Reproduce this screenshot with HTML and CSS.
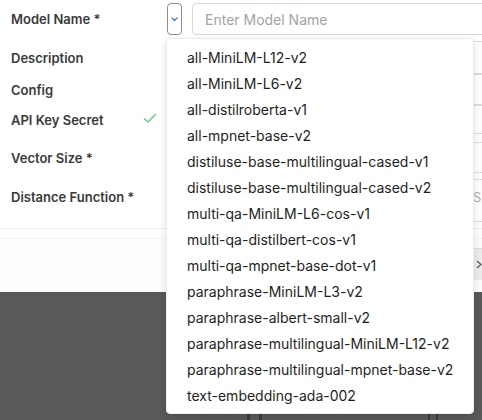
FILE: index.html
```html
<!DOCTYPE html>
<html>
<head>
<meta charset="utf-8">
<link rel="stylesheet" href="styles.css">
</head>
<body>
<div class="page">
  <div class="panel">
    <div class="form">
      <div class="row r1">
        <div class="label">Model Name *</div>
        <div class="picker">
          <svg width="7" height="5" viewBox="0 0 7 5"><path d="M1 1 L3.5 3.5 L6 1" fill="none" stroke="#3f7ee8" stroke-width="1.3" stroke-linecap="round" stroke-linejoin="round"/></svg>
        </div>
        <div class="input top"><span class="ph">Enter Model Name</span></div>
      </div>
      <div class="row r2">
        <div class="label">Description</div>
        <div class="field"></div>
      </div>
      <div class="row r3">
        <div class="label">Config</div>
        <div class="field"></div>
      </div>
      <div class="row r4">
        <div class="label"><span>API Key Secret</span>
          <svg class="check" width="14" height="11" viewBox="0 0 14 11"><path d="M1.5 5.8 L5 9 L12.5 1.5" fill="none" stroke="#6fd08c" stroke-width="1.6" stroke-linecap="round" stroke-linejoin="round"/></svg>
        </div>
        <div class="field"></div>
      </div>
      <div class="row r5">
        <div class="label">Vector Size *</div>
        <div class="field"></div>
      </div>
      <div class="row r6">
        <div class="label">Distance Function *</div>
        <div class="field"><span class="sel">S</span></div>
      </div>
    </div>
    <div class="footer">
      <div class="btn"><svg width="6" height="9" viewBox="0 0 6 9"><path d="M1 1 L5 4.5 L1 8" fill="none" stroke="#555" stroke-width="1.2"/></svg></div>
    </div>
  </div>
  <div class="backdrop">
    <div class="frame"><div class="inner"></div></div>
  </div>

  <ul class="menu">
    <li>all-MiniLM-L12-v2</li>
    <li>all-MiniLM-L6-v2</li>
    <li>all-distilroberta-v1</li>
    <li>all-mpnet-base-v2</li>
    <li>distiluse-base-multilingual-cased-v1</li>
    <li>distiluse-base-multilingual-cased-v2</li>
    <li>multi-qa-MiniLM-L6-cos-v1</li>
    <li>multi-qa-distilbert-cos-v1</li>
    <li>multi-qa-mpnet-base-dot-v1</li>
    <li>paraphrase-MiniLM-L3-v2</li>
    <li>paraphrase-albert-small-v2</li>
    <li>paraphrase-multilingual-MiniLM-L12-v2</li>
    <li>paraphrase-multilingual-mpnet-base-v2</li>
    <li>text-embedding-ada-002</li>
  </ul>
</div>
</body>
</html>
```

FILE: styles.css
```css
* { box-sizing: border-box; }
html, body { margin: 0; padding: 0; }
body {
  width: 482px;
  height: 420px;
  overflow: hidden;
  font-family: Inter, "Noto Sans", sans-serif;
  background: #ffffff;
}
.page {
  position: relative;
  width: 482px;
  height: 420px;
  overflow: hidden;
}
.panel {
  height: 292px;
  background: #ffffff;
}
.form {
  padding-top: 3px;
  height: 229px;
  border-bottom: 1px solid #efefef;
}
.row {
  display: flex;
  align-items: center;
}
.label {
  width: 167px;
  padding-left: 11px;
  font-size: 13px;
  font-weight: 600;
  color: #3a3a3a;
  display: flex;
  align-items: center;
  flex-shrink: 0;
}
.check { margin-left: auto; margin-right: 10px; margin-top: -3px; }
.picker {
  width: 15px;
  height: 32px;
  border: 1px solid #8c8c8c;
  border-radius: 4px;
  display: flex;
  align-items: center;
  justify-content: center;
  flex-shrink: 0;
}
.input {
  margin-left: 10px;
  width: 330px;
  height: 32px;
  border: 1px solid #d9d9d9;
  border-radius: 4px;
  display: flex;
  align-items: center;
  padding-left: 12px;
  flex-shrink: 0;
}
.ph { font-size: 14px; color: #a3a3a3; }
.field {
  margin-left: 25px;
  width: 330px;
  border: 1px solid #dcdcdc;
  border-radius: 4px;
  flex-shrink: 0;
  display: flex;
  align-items: center;
}
.r1 { height: 32px; }
.r2 { margin-top: 6px; }
.r2 .field { height: 33px; }
.r3 .field { height: 31px; }
.r4 .field { height: 29px; }
.r5 { margin-top: 8px; }
.r5 .field { height: 31px; }
.r6 { margin-top: 6px; align-items: flex-start; }
.r6 .label { padding-top: 10px; }
.r6 .field { height: 43px; }
.sel { margin-left: 280px; font-size: 13px; color: #b0b0b0; margin-top: -8px; }
.footer {
  height: 63px;
  background: #fdfdfd;
  padding-top: 9px;
  border-top: 1px solid #f2f2f2;
  margin-top: 9px;
}
.btn {
  margin-left: 474px;
  width: 40px;
  height: 32px;
  background: #ececec;
  border-top: 1px solid #dddddd;
  padding-left: 2px;
  display: flex;
  align-items: center;
}
.backdrop {
  height: 128px;
  background: #595959;
  padding-top: 108px;
}
.frame {
  margin-left: 247px;
  width: 191px;
  height: 30px;
  border-left: 3px solid #3d3d3d;
  border-right: 2px solid #3d3d3d;
  padding: 0 6px 0 9px;
}
.inner {
  height: 30px;
  border-left: 3px solid #3d3d3d;
  border-right: 2px solid #3d3d3d;
}
.menu {
  position: absolute;
  left: 166px;
  top: 38px;
  width: 308px;
  height: 376px;
  margin: 0;
  padding: 6px 0;
  list-style: none;
  background: #ffffff;
  border: 1px solid #ebebeb;
  border-radius: 4px;
  box-shadow: 0 3px 8px rgba(0,0,0,0.12);
}
.menu li {
  height: 26px;
  line-height: 26px;
  padding-left: 20px;
  font-size: 14px;
  color: #1e1e1e;
  white-space: nowrap;
}
```
